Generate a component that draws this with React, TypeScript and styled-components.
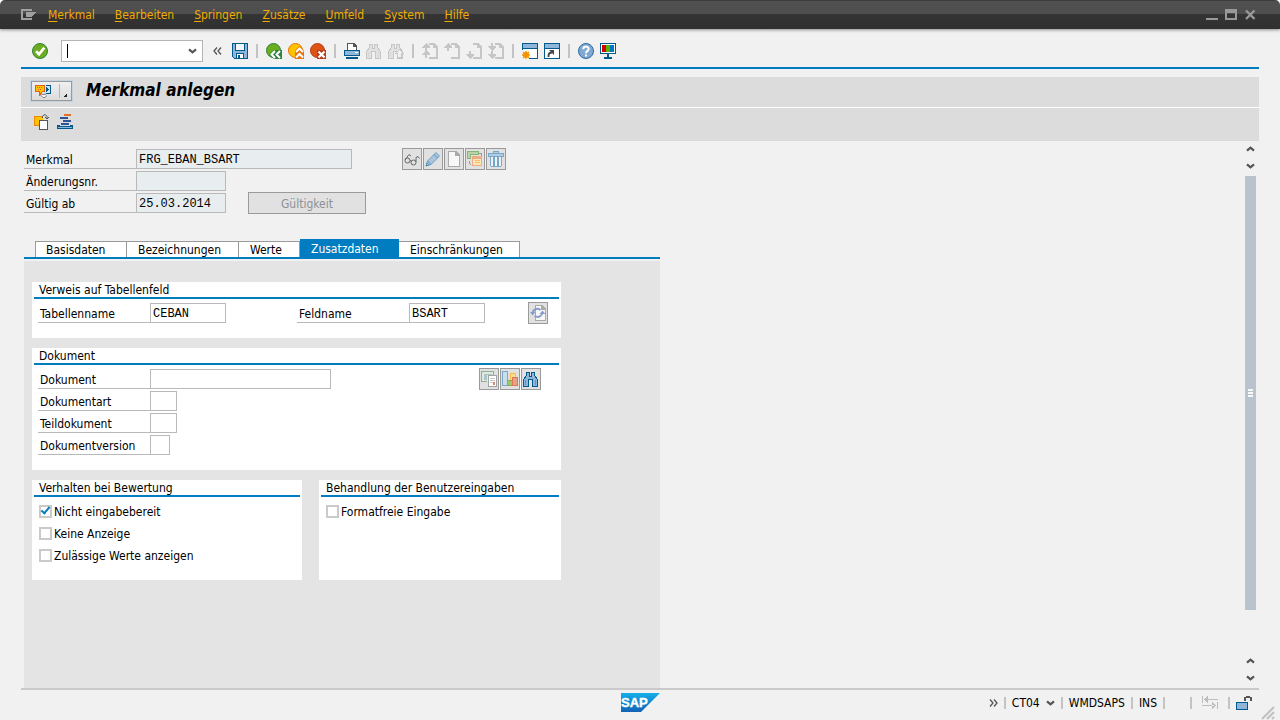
import React from 'react';
import styled, { createGlobalStyle } from 'styled-components';

const blue = '#007cc0';
const ink = '#005b8c';
const sky = '#8fb5da';
const off = '#c6c6c6';
const uiFont = '"DejaVu Sans Condensed", "Noto Sans", sans-serif';

const Global = createGlobalStyle`
  *, *::before, *::after { box-sizing: border-box; }
  html { background: #fff; }
  body { margin: 0; font: 12px/16px ${uiFont}; color: #000; }
  button, input { font: inherit; color: inherit; margin: 0; }
  button { padding: 0; border: 0; background: none; }
  svg { display: block; flex: none; }
`;

const Window = styled.div`
  display: flex;
  flex-direction: column;
  min-height: 100vh;
  background: #f1f1f1;
  border-radius: 5px 5px 0 0;
  overflow: hidden;
`;
const TitleBar = styled.header`
  display: flex;
  align-items: center;
  height: 29px;
  padding: 0 24px 0 21px;
  background: linear-gradient(#3c3c3c 1px, #505050 1px, #4e4e4e 14px, #343434 14px, #303030);
  box-shadow: 0 1px 3px #8a8a8a;
`;
const MenuNav = styled.nav`
  display: flex;
  flex: 1;
  gap: 20px;
  margin-left: 12px;
`;
const MenuLink = styled.a`
  color: #f0ab00;
  text-decoration: none;
  white-space: nowrap;
  u { text-underline-offset: 2px; }
`;
const WindowButtons = styled.div`
  display: flex;
  gap: 6px;
`;
const IconButton = styled.button`
  display: flex;
  align-items: center;
  justify-content: center;
`;
const Body = styled.div`
  display: flex;
  flex-direction: column;
  flex: 1;
  padding: 0 21px;
`;
const Toolbar = styled.div`
  display: flex;
  align-items: center;
  gap: 6px;
  height: 40px;
  padding: 6px 0 0 11px;
  border-bottom: 2px solid ${blue};
`;
const Divider = styled.span`
  width: 2px;
  height: 14px;
  margin: 0 2px;
  background: #c3c3c3;
`;
const CommandBox = styled.div`
  display: flex;
  align-items: center;
  width: 142px;
  height: 22px;
  margin: 0 4px 0 7px;
  padding: 0 5px;
  background: #fff;
  border: 1px solid #b4b4b4;
`;
const Caret = styled.span`
  width: 1px;
  height: 14px;
  background: #000;
`;
const CommandInput = styled.input`
  flex: 1;
  min-width: 0;
  height: 16px;
  padding: 0;
  border: 0;
  outline: 0;
  background: none;
`;
const Collapse = styled(IconButton)`
  margin-right: 4px;
`;
const Heading = styled.div`
  display: flex;
  align-items: center;
  height: 30px;
  margin-top: 8px;
  padding: 0 10px 2px;
  gap: 14px;
  background: #dcdcdc;
`;
const Title = styled.h1`
  margin: 0;
  padding-bottom: 2px;
  font: italic bold 17px/20px ${uiFont};
`;
const ServiceButton = styled.button`
  display: flex;
  align-items: center;
  width: 41px;
  height: 20px;
  padding-left: 3px;
  background: linear-gradient(#efefef, #dcdcdc);
  border: 1px solid #999;
  outline: 1px solid #c3d3df;
`;
const Actions = styled.div`
  display: flex;
  align-items: center;
  gap: 7px;
  height: 33px;
  padding: 0 13px 4px;
  margin-top: 1px;
  background: #dcdcdc;
  box-shadow: 0 -1px #fff;
  border-bottom: 1px solid #d8d8d8;
`;
const Content = styled.main`
  display: flex;
  flex: 1;
  padding: 0 3px;
`;
const Form = styled.div`
  display: flex;
  flex-direction: column;
  flex: 1;
  min-width: 0;
`;
const KeyFields = styled.div`
  display: flex;
  padding-top: 8px;
`;
const Rows = styled.div`
  display: flex;
  flex-direction: column;
  gap: 2px;
`;
const Row = styled.div`
  display: flex;
  height: 20px;
`;
const FieldPair = styled.div`
  display: flex;
  gap: 71px;
`;
const Label = styled.label`
  width: 112px;
  padding: 3px 0 0 2px;
  border-bottom: 1px solid #b9b9b9;
  white-space: nowrap;
`;
const Field = styled.input<{ $width: number }>`
  width: ${p => p.$width}px;
  height: 20px;
  padding: 2px 2px 0;
  background: #fff;
  border: 1px solid #b9b9b9;
  border-radius: 0;
  font: 12px/16px "Liberation Mono", monospace;
  &:read-only { background: #e8edf0; }
`;
const Validity = styled.button`
  align-self: flex-end;
  width: 118px;
  height: 22px;
  margin: 0 36px -1px 22px;
  padding-top: 2px;
  background: #e1e1e1;
  border: 1px solid #9a9a9a;
  color: #8c9095;
`;
const KeySide = styled.div`
  display: flex;
  margin-left: -126px;
`;
const ButtonGroup = styled.div`
  display: flex;
  gap: 1px;
  margin: -1px 0;
`;
const Tile = styled(IconButton)`
  width: 20px;
  height: 22px;
  background: #e1e1e1;
  border: 1px solid #9a9a9a;
`;
const Tabs = styled.div`
  display: flex;
  align-items: flex-end;
  width: 636px;
  height: 20px;
  margin-top: 26px;
  padding-left: 11px;
  border-bottom: 2px solid ${blue};
`;
const Tab = styled.button<{ $width: number; $active?: boolean }>`
  width: ${p => p.$width}px;
  height: ${p => (p.$active ? 18 : 16)}px;
  padding-left: 11px;
  text-align: left;
  line-height: 17px;
  color: ${p => (p.$active ? '#fff' : '#000')};
  background: ${p => (p.$active ? blue : '#fff')};
  border: solid ${p => (p.$active ? blue : '#9a9a9a')};
  border-width: ${p => (p.$active ? '2px 0 0' : '1px 1px 0 0')};
  &:first-child { border-left-width: 1px; padding-left: 10px; }
`;
const Panel = styled.section`
  display: flex;
  flex-direction: column;
  flex: 1;
  gap: 10px;
  width: 636px;
  margin-top: 2px;
  padding: 21px 99px 21px 8px;
  background: #e4e4e4;
`;
const Split = styled.div`
  display: grid;
  grid-template-columns: 270px 1fr;
  gap: 17px;
`;
const Group = styled.section`
  padding: 0 2px 15px;
  background: #fff;
`;
const GroupTitle = styled.h2`
  margin: 0 0 4px;
  padding: 2px 0 0 5px;
  font: 12px/13px ${uiFont};
  border-bottom: 2px solid ${blue};
`;
const GroupBody = styled.div`
  display: flex;
  align-items: flex-start;
  justify-content: space-between;
  padding: 0 11px 0 4px;
`;
const DocumentBody = styled(GroupBody)`
  padding-right: 18px;
`;
const Checks = styled.div`
  display: flex;
  flex-direction: column;
  gap: 6px;
  padding: 3px 5px 1px;
`;
const CheckLabel = styled.label`
  display: flex;
  align-items: flex-start;
  gap: 2px;
  height: 16px;
  white-space: nowrap;
`;
const CheckBox = styled.input`
  appearance: none;
  && { margin-top: 1px; }
  width: 13px;
  height: 13px;
  background: #fff;
  border: 2px solid #cacaca;
  position: relative;
  &:checked::after {
    content: '';
    position: absolute;
    left: 2px;
    top: -2px;
    width: 5px;
    height: 9px;
    border: solid ${blue};
    border-width: 0 2px 2px 0;
    transform: rotate(40deg);
  }
`;
const ScrollBar = styled.div`
  display: flex;
  flex-direction: column;
  align-items: center;
  width: 11px;
`;
const ArrowPair = styled.div`
  display: flex;
  flex-direction: column;
  gap: 8px;
  padding: 3px 0 6px;
`;
const ScrollArrow = styled(IconButton)`
  height: 9px;
`;
const ScrollThumb = styled.div`
  display: flex;
  align-items: center;
  justify-content: center;
  width: 11px;
  flex: 434;
  background: #b8c3cd;
`;
const ScrollRest = styled.div`
  flex: 43;
`;
const StatusBar = styled.footer`
  display: grid;
  grid-template-columns: 1fr auto 1fr;
  align-items: start;
  height: 32px;
  padding-top: 3px;
  border-top: 2px solid #cacaca;
  position: relative;
`;
const StatusItems = styled.div`
  display: flex;
  align-items: center;
  justify-content: flex-end;
  gap: 6px;
  height: 20px;
  padding-right: 7px;
`;
const StatusLine = styled.span`
  width: 2px;
  height: 12px;
  background: #c3c3c3;
`;
const StatusGap = styled.span`
  width: 13px;
`;
const TabMode = styled.span`
  margin: 0 4px;
`;
const Grip = styled.span`
  position: absolute;
  right: -17px;
  bottom: 0;
`;

type IconProps = { children: React.ReactNode; w?: number; h?: number; smooth?: boolean };
const Icon = ({ children, w = 16, h = 16, smooth }: IconProps) => (
  <svg width={w} height={h} viewBox={`0 0 ${w} ${h}`} fill="none" aria-hidden="true"
    shapeRendering={smooth ? 'auto' : 'crispEdges'}>
    {children}
  </svg>
);

const Chevron = ({ up }: { up?: boolean }) => (
  <Icon w={9} h={6} smooth>
    <path d={up ? 'M1 4.7 4.5 1.7 8 4.7' : 'M1 1.3 4.5 4.3 8 1.3'} stroke="#555" strokeWidth="2.2" />
  </Icon>
);
const DoubleChevron = ({ right }: { right?: boolean }) => (
  <Icon w={9} h={8} smooth>
    <path d={right ? 'M1 .5 4 4 1 7.5M5 .5 8 4 5 7.5' : 'M4 .5 1 4 4 7.5M8 .5 5 4 8 7.5'} stroke="#555" strokeWidth="1.3" />
  </Icon>
);
const MenuIcon = () => (
  <Icon w={15} h={12}>
    <path d="M10 2V1H1V10H10V9" stroke="#a0a0a0" strokeWidth="2" />
    <path d="M5 3H15V4H14V5H13V6H12V7H11V8H5Z" fill="#a0a0a0" />
  </Icon>
);
const OkIcon = () => (
  <Icon smooth>
    <circle cx="8" cy="8" r="7.5" fill="#6cad1e" stroke="#2f8140" />
    <path d="M4 8.2 7 11.2 12.3 4.6" stroke="#fff" strokeWidth="2.6" />
  </Icon>
);
const SaveIcon = () => (
  <Icon>
    <path d="M0 0H16V16H2L0 14Z" fill={ink} />
    <path d="M1 1H15V15H2L1 14Z" fill={sky} />
    <path d="M3 1H13V8H3Z" fill={ink} />
    <path d="M4 1H12V7H4Z" fill="#f4f8fc" />
    <path d="M4 10H12V15H4Z" fill={ink} />
    <path d="M5 11H11V16H5Z" fill="#fff" />
    <path d="M6 12H8V15H6ZM5 15H11V16H5Z" fill={ink} />
  </Icon>
);
const BackIcon = () => (
  <Icon smooth>
    <circle cx="7.5" cy="7.5" r="7" fill="#6cad1e" stroke="#2f8140" />
    <path d="M3 12 8 7H16V16H8Z" fill="#2f8140" />
    <path d="M9 8 5.5 11.5 9 15M14 8 10.5 11.5 14 15" stroke="#fff" strokeWidth="2" />
  </Icon>
);
const UpIcon = () => (
  <Icon smooth>
    <circle cx="7.5" cy="7.5" r="7" fill="#fdc300" stroke="#e8730c" />
    <path d="M7 7.5 11.5 3 16 7.5V16H7Z" fill="#e8730c" />
    <path d="M8 9 11.5 5.5 15 9M8 14.5 11.5 11 15 14.5" stroke="#fff" strokeWidth="2" />
  </Icon>
);
const CancelIcon = () => (
  <Icon smooth>
    <circle cx="7.5" cy="7.5" r="7" fill="#dd5313" stroke="#b93b1b" />
    <path d="M7 7H16V16H7Z" fill="#b93b1b" />
    <path d="M8.5 8.5 14.5 14.5M14.5 8.5 8.5 14.5" stroke="#fff" strokeWidth="2.2" />
  </Icon>
);
const PrintIcon = () => (
  <Icon>
    <path d="M3 0H10L13 3V7H3Z" fill="#555" />
    <path d="M4 1H9V4H12V7H4Z" fill="#fff" />
    <path d="M0 7H16V13H0Z" fill={ink} />
    <path d="M1 8H15V12H1Z" fill={sky} />
    <path d="M11 9H14V10H11Z" fill="#fff" />
    <path d="M2 14H14V16H2Z" fill={ink} />
  </Icon>
);
const Binoculars = ({ stroke, fill, more }: { stroke: string; fill: string; more?: boolean }) => (
  <Icon>
    <path d="M3.5 1H6.500V5.500H8.500V1H11.500V4.500L14.500 8.500V15H9.500V8.500H5.500V15H.5V8.500L3.500 4.500Z" fill={fill} stroke={stroke} />
    <path d="M2 9H3V14H2ZM12 9H13V14H12Z" fill={stroke} opacity=".35" />
    {more && <path d="M11.500 6.500 15.500 10.500H13.500V14.500H9.500V10.500H7.500Z" fill="#f1f1f1" stroke={stroke} />}
  </Icon>
);
const PageIcon = ({ up, down, double }: { up?: boolean; down?: boolean; double?: boolean }) => (
  <Icon>
    <path d="M7 1H12L15 4V15H7" stroke={off} strokeWidth="1.500" />
    <path d="M11 1H12L15 4V5H11Z" fill={off} />
    {up && <path d="M4 0 8 4V5H5V8H3V5H0V4Z" fill={off} />}
    {up && double && <path d="M4 7 8 11V12H5V15H3V12H0V11Z" fill={off} />}
    {down && <path d="M3 8H5V11H8V12L4 16 0 12V11H3Z" fill={off} />}
    {down && double && <path d="M3 0H5V3H8V4L4 8 0 4V3H3Z" fill={off} />}
  </Icon>
);
const WindowIcon = ({ link }: { link?: boolean }) => (
  <Icon>
    <path d="M0 0H16V16H0Z" fill={ink} />
    <path d="M1 1H15V5H1Z" fill={sky} />
    <path d="M1 6H15V15H1Z" fill="#fff" />
    {link
      ? <g shapeRendering="auto"><path d="M4.500 14V12.500C4.500 10.500 6 9.500 8 9.500" stroke="#444" strokeWidth="1.800" /><path d="M5 7H10V12Z" fill="#444" /></g>
      : <g shapeRendering="auto"><path d="M0 7H7V16H0Z" fill="#f6f6f6" /><circle cx="4" cy="12" r="3" fill="#f7a600" /><path d="M4 8V16M0 12H8M1 9 7 15M7 9 1 15" stroke="#f39200" strokeWidth="1.300" /></g>}
  </Icon>
);
const HelpIcon = () => (
  <Icon smooth>
    <circle cx="8" cy="8" r="7.500" fill="#7fa9d2" stroke="#2b6b9d" />
    <path d="M5.300 6.300C5.300 2.700 10.700 2.800 10.700 6 10.700 7.800 8 8 8 10.200" stroke="#fff" strokeWidth="2" />
    <path d="M7 11.500H9V13.500H7Z" fill="#fff" />
  </Icon>
);
const MonitorIcon = () => (
  <Icon>
    <path d="M0 0H16V11H0Z" fill={ink} />
    <path d="M1 1H15V10H1Z" fill="#fff" />
    <path d="M2 2H6V9H2Z" fill="#d40000" />
    <path d="M6 2H10V9H6Z" fill="#5fb000" />
    <path d="M10 2H14V9H10Z" fill="#0079c1" />
    <path d="M7 11H9V14H7ZM4 14H12V16H4Z" fill={ink} />
  </Icon>
);
const ServiceIcon = () => (
  <Icon w={16} h={15}>
    <path d="M10.500 1.500H15.500V9.500H10.500" fill="#cfe3f5" stroke={ink} />
    <path d="M11 3 14 5.500 11 8Z" fill={ink} />
    <path d="M.5 1H9.500V7.500H7.500L4.500 11V7.500H.5Z" fill="#fdc300" stroke="#e0601a" />
    <path d="M2 3H3V4H2ZM4 3H5V4H4ZM6 3H7V4H6ZM3 5H4V6H3ZM5 5H6V6H5Z" fill="#e0601a" />
    <g shapeRendering="auto"><path d="M5.500 11 8 13.500H10L11.500 11.500M6 9.500 8 10.500 11 10" fill="#fff" stroke="#777" /></g>
  </Icon>
);
const OtherObjectIcon = () => (
  <Icon w={16} h={16}>
    <path d="M0 2H9V12H0Z" fill="#ef8a00" />
    <path d="M1 3H9V11H1Z" fill="#fdc300" />
    <path d="M5 6H14V16H5Z" fill="#555" />
    <path d="M6 7H13V15H6Z" fill="#fff" />
    <g shapeRendering="auto"><path d="M8.500 4V2.500L10 .8H11.500L13 2.500V4.500M11 3 13 5 15 3" stroke="#555" /></g>
  </Icon>
);
const OverviewIcon = () => (
  <Icon w={16} h={16}>
    <path d="M7 0H14V2H7Z" fill="#e0702c" />
    <path d="M3 3H11V5H3ZM6 6H14V8H6ZM4 9H12V11H4Z" fill="#2b5597" />
    <path d="M0 11H3V12H13V11H16V15H0Z" fill={ink} />
    <path d="M1 13H15V14H1Z" fill={sky} />
  </Icon>
);
const GlassesIcon = () => (
  <Icon smooth>
    <circle cx="3.500" cy="9.500" r="2.500" stroke="#666" />
    <circle cx="9.500" cy="11.500" r="2.500" stroke="#666" />
    <path d="M1 9 5 3.500 7 5M6 9.500 7.500 10M12 11 12 6.500 14 5.500 15.500 7.500" stroke="#666" />
  </Icon>
);
const PencilIcon = () => (
  <Icon smooth>
    <path d="M1 15 2.500 10 11 1.500 14.500 5 6 13.500Z" fill="#a9c6de" stroke="#6c9fc3" />
    <path d="M2.500 10 6 13.500M9 3.500 12.500 7M1 15 4 14 2 12Z" stroke="#5c93ba" />
  </Icon>
);
const NewIcon = () => (
  <Icon>
    <path d="M2.500 .5H10L13.500 4V15.500H2.500Z" fill="#f7f7f7" stroke="#aaa" />
    <path d="M9 0V5H14Z" fill="#aaa" />
  </Icon>
);
const TemplateIcon = () => (
  <Icon>
    <path d="M0 0H12V4H4V8H0Z" fill="#8ab57a" />
    <path d="M1 1H11V3H3V7H1Z" fill="#b9d3a5" />
    <path d="M5 5H15V15H5Z" fill="#eeaa83" />
    <path d="M6 8H14V14H6Z" fill="#fbe6b6" />
    <path d="M8 9H13V10H8ZM8 11H13V12H8Z" fill="#f3bd70" />
    <path d="M12 2H14V5M2 10V12L4 14" stroke="#999" />
  </Icon>
);
const TrashIcon = () => (
  <Icon>
    <path d="M5.500 2.500V.5H10.500V2.500M.5 2.500H15.500V5.500H.5Z" fill="#b5cde0" stroke="#78a8c8" />
    <path d="M2.500 6V14.500L3.500 15.500H12.500L13.500 14.500V6" fill="#eef3f7" stroke="#78a8c8" />
    <path d="M5 6H7V15H5ZM9 6H11V15H9Z" fill="#78a8c8" />
  </Icon>
);
const RefreshIcon = () => (
  <Icon>
    <path d="M5.500 .5H12L15.500 4V15.500H5.500Z" fill="#f7f7f7" stroke="#aaa" />
    <path d="M11 0V5H16Z" fill="#aaa" />
    <g shapeRendering="auto">
      <path d="M2.500 8C3 4.500 7 2.500 10.500 5M12.500 7.500C12 11.500 8 13 4.500 11" stroke="#8a9dc9" strokeWidth="2" />
      <path d="M0 7H5.500L2.500 10.500ZM9.500 9 12.500 5.500 15.500 9Z" fill="#8a9dc9" />
    </g>
  </Icon>
);
const DocLinkIcon = () => (
  <Icon>
    <path d="M6 10.500H.5V.5H12.500V4" fill="#dfe8e1" stroke="#91ad96" />
    <path d="M3 3H11V4H6V9H3Z" fill="#a9c7c6" />
    <path d="M7 4H16V16H7Z" fill="#a3a3a3" />
    <path d="M8 5H15V15H8Z" fill="#fff" />
    <path d="M9 7H14V8H9ZM9 9H14V10H9ZM9 11H12V12H9Z" fill="#c9c9c9" />
    <path d="M12 11H14V14H12Z" fill="#de8a72" />
  </Icon>
);
const ChartIcon = () => (
  <Icon>
    <path d="M.5 .5H5.500V14.500H.5Z" fill="#cbdcea" stroke="#78a8c8" />
    <path d="M8.500 2.500H13.500V9H8.500Z" fill="#fbdc8c" stroke="#f3bd55" />
    <path d="M5.500 9.500H10.500V14.500H5.500Z" fill="#a4c76c" stroke="#84ad5c" />
    <path d="M10.500 6.500H15.500V14.500H10.500Z" fill="#e9a184" stroke="#d9795c" />
  </Icon>
);
const SapLogo = () => (
  <svg width="39" height="19" viewBox="0 0 39 19" role="img" aria-label="SAP">
    <defs>
      <linearGradient id="sap" x1="0" y1="0" x2="0" y2="1">
        <stop offset="0" stopColor="#13aee9" />
        <stop offset="1" stopColor="#1363b5" />
      </linearGradient>
    </defs>
    <path d="M0 0H39L20 19H0Z" fill="url(#sap)" />
    <text x="0" y="14" fill="#fff" stroke="#fff" strokeWidth=".4" fontFamily="Liberation Sans, sans-serif" fontWeight="700" fontSize="13">SAP</text>
  </svg>
);

const menus = ['Merkmal', 'Bearbeiten', 'Springen', 'Zusätze', 'Umfeld', 'System', 'Hilfe'];

const LabeledField = ({ id, label, width, value = '', readOnly }: { id: string; label: string; width: number; value?: string; readOnly?: boolean }) => (
  <Row>
    <Label htmlFor={id}>{label}</Label>
    <Field id={id} $width={width} defaultValue={value} readOnly={readOnly} spellCheck={false} />
  </Row>
);
const Tool = ({ label, children }: { label: string; children: React.ReactNode }) => (
  <IconButton type="button" aria-label={label}>{children}</IconButton>
);
const TileButton = ({ label, children }: { label: string; children: React.ReactNode }) => (
  <Tile type="button" aria-label={label}>{children}</Tile>
);

export default function App() {
  return (
    <>
      <Global />
      <Window>
        <TitleBar>
          <Tool label="Menü"><MenuIcon /></Tool>
          <MenuNav>
            {menus.map(m => <MenuLink key={m} href="#"><u>{m[0]}</u>{m.slice(1)}</MenuLink>)}
          </MenuNav>
          <WindowButtons>
            <Tool label="Minimieren"><Icon w={13} h={12}><path d="M0 9H12V11H0Z" fill="#999" /></Icon></Tool>
            <Tool label="Maximieren"><Icon w={13} h={12}><path d="M0 0H12V4H0ZM0 9H12V11H0ZM0 0H2V11H0ZM10 0H12V11H10Z" fill="#999" /></Icon></Tool>
            <Tool label="Schließen"><Icon w={12} h={12} smooth><path d="M2 1.500 10.500 10M10.500 1.500 2 10" stroke="#999" strokeWidth="2.400" /></Icon></Tool>
          </WindowButtons>
        </TitleBar>
        <Body>
          <Toolbar>
            <Tool label="Weiter"><OkIcon /></Tool>
            <CommandBox>
              <Caret />
              <CommandInput aria-label="Kommandofeld" />
              <Tool label="Verlauf"><Chevron /></Tool>
            </CommandBox>
            <Collapse type="button" aria-label="Kommandofeld schließen"><DoubleChevron /></Collapse>
            <Tool label="Sichern"><SaveIcon /></Tool>
            <Divider />
            <Tool label="Zurück"><BackIcon /></Tool>
            <Tool label="Beenden"><UpIcon /></Tool>
            <Tool label="Abbrechen"><CancelIcon /></Tool>
            <Divider />
            <Tool label="Drucken"><PrintIcon /></Tool>
            <Tool label="Suchen"><Binoculars stroke={off} fill="#e2e2e2" /></Tool>
            <Tool label="Weiter suchen"><Binoculars stroke={off} fill="#e2e2e2" more /></Tool>
            <Divider />
            <Tool label="Erste Seite"><PageIcon up double /></Tool>
            <Tool label="Vorige Seite"><PageIcon up /></Tool>
            <Tool label="Nächste Seite"><PageIcon down /></Tool>
            <Tool label="Letzte Seite"><PageIcon down double /></Tool>
            <Divider />
            <Tool label="Neuer Modus"><WindowIcon /></Tool>
            <Tool label="Verknüpfung"><WindowIcon link /></Tool>
            <Divider />
            <Tool label="Hilfe"><HelpIcon /></Tool>
            <Tool label="Layout anpassen"><MonitorIcon /></Tool>
          </Toolbar>
          <Heading>
            <ServiceButton type="button" aria-label="Dienste zum Objekt">
              <ServiceIcon />
              <Icon w={20} h={18}><path d="M8 2H9V16H8Z" fill="#b5b5b5" /><path d="M16 11V15H12Z" fill="#222" /></Icon>
            </ServiceButton>
            <Title>Merkmal anlegen</Title>
          </Heading>
          <Actions>
            <Tool label="Anderes Objekt"><OtherObjectIcon /></Tool>
            <Tool label="Übersicht"><OverviewIcon /></Tool>
          </Actions>
          <Content>
            <Form>
              <KeyFields>
                <Rows>
                  <LabeledField id="merkmal" label="Merkmal" width={216} value="FRG_EBAN_BSART" readOnly />
                  <LabeledField id="aenderung" label="Änderungsnr." width={90} readOnly />
                  <LabeledField id="gueltig" label="Gültig ab" width={90} value="25.03.2014" readOnly />
                </Rows>
                <KeySide>
                  <Validity type="button" disabled>Gültigkeit</Validity>
                  <ButtonGroup>
                    <TileButton label="Anzeigen"><GlassesIcon /></TileButton>
                    <TileButton label="Ändern"><PencilIcon /></TileButton>
                    <TileButton label="Anlegen"><NewIcon /></TileButton>
                    <TileButton label="Anlegen mit Vorlage"><TemplateIcon /></TileButton>
                    <TileButton label="Löschen"><TrashIcon /></TileButton>
                  </ButtonGroup>
                </KeySide>
              </KeyFields>
              <Tabs role="tablist">
                <Tab type="button" role="tab" $width={92}>Basisdaten</Tab>
                <Tab type="button" role="tab" $width={112}>Bezeichnungen</Tab>
                <Tab type="button" role="tab" $width={61}>Werte</Tab>
                <Tab type="button" role="tab" $width={99} $active aria-selected="true">Zusatzdaten</Tab>
                <Tab type="button" role="tab" $width={121}>Einschränkungen</Tab>
              </Tabs>
              <Panel>
                <Group>
                  <GroupTitle>Verweis auf Tabellenfeld</GroupTitle>
                  <GroupBody>
                    <FieldPair>
                      <LabeledField id="tabelle" label="Tabellenname" width={76} value="CEBAN" />
                      <LabeledField id="feld" label="Feldname" width={76} value="BSART" />
                    </FieldPair>
                    <ButtonGroup><TileButton label="Aktualisieren"><RefreshIcon /></TileButton></ButtonGroup>
                  </GroupBody>
                </Group>
                <Group>
                  <GroupTitle>Dokument</GroupTitle>
                  <DocumentBody>
                    <Rows>
                      <LabeledField id="dokument" label="Dokument" width={181} />
                      <LabeledField id="dokumentart" label="Dokumentart" width={27} />
                      <LabeledField id="teildokument" label="Teildokument" width={27} />
                      <LabeledField id="version" label="Dokumentversion" width={20} />
                    </Rows>
                    <ButtonGroup>
                      <TileButton label="Dokument anzeigen"><DocLinkIcon /></TileButton>
                      <TileButton label="Originale"><ChartIcon /></TileButton>
                      <TileButton label="Dokument suchen"><Binoculars stroke={ink} fill={sky} /></TileButton>
                    </ButtonGroup>
                  </DocumentBody>
                </Group>
                <Split>
                  <Group>
                    <GroupTitle>Verhalten bei Bewertung</GroupTitle>
                    <Checks>
                      <CheckLabel><CheckBox type="checkbox" defaultChecked />Nicht eingabebereit</CheckLabel>
                      <CheckLabel><CheckBox type="checkbox" />Keine Anzeige</CheckLabel>
                      <CheckLabel><CheckBox type="checkbox" />Zulässige Werte anzeigen</CheckLabel>
                    </Checks>
                  </Group>
                  <Group>
                    <GroupTitle>Behandlung der Benutzereingaben</GroupTitle>
                    <Checks>
                      <CheckLabel><CheckBox type="checkbox" />Formatfreie Eingabe</CheckLabel>
                    </Checks>
                  </Group>
                </Split>
              </Panel>
            </Form>
            <ScrollBar>
              <ArrowPair>
                <ScrollArrow type="button" aria-label="Anfang"><Chevron up /></ScrollArrow>
                <ScrollArrow type="button" aria-label="Hoch"><Chevron /></ScrollArrow>
              </ArrowPair>
              <ScrollThumb>
                <Icon w={6} h={8}><path d="M0 0H5V2H0ZM0 3H5V5H0ZM0 6H5V8H0Z" fill="#f6f8fa" /></Icon>
              </ScrollThumb>
              <ScrollRest />
              <ArrowPair>
                <ScrollArrow type="button" aria-label="Runter"><Chevron up /></ScrollArrow>
                <ScrollArrow type="button" aria-label="Ende"><Chevron /></ScrollArrow>
              </ArrowPair>
            </ScrollBar>
          </Content>
          <StatusBar>
            <span />
            <SapLogo />
            <StatusItems>
              <Tool label="Mehr"><DoubleChevron right /></Tool>
              <StatusLine />
              <span>CT04</span>
              <Tool label="Transaktion"><Chevron /></Tool>
              <StatusLine />
              <span>WMDSAPS</span>
              <StatusLine />
              <span>INS</span>
              <StatusLine />
              <StatusGap />
              <StatusLine />
              <TabMode>
                <Icon><path d="M0 1H1V8H0ZM15 7H16V14H15ZM4 4H16V5H4ZM0 10H12V11H0ZM2 4.500 6 1V8ZM14 10.500 10 7V14Z" fill="#bdbdbd" /></Icon>
              </TabMode>
              <StatusLine />
              <Icon><path d="M0 7H12V15H0Z" fill={ink} /><path d="M1 8H11V14H1Z" fill={sky} /><path d="M8 6V2H10V1H14V2H16V6H14V3H10V6Z" fill="#555" /></Icon>
            </StatusItems>
            <Grip><Icon w={15} h={15} smooth><path d="M1 14 13 2M6 14 13 7M11 14 13 12" stroke="#c0c0c0" strokeWidth="2" /></Icon></Grip>
          </StatusBar>
        </Body>
      </Window>
    </>
  );
}
